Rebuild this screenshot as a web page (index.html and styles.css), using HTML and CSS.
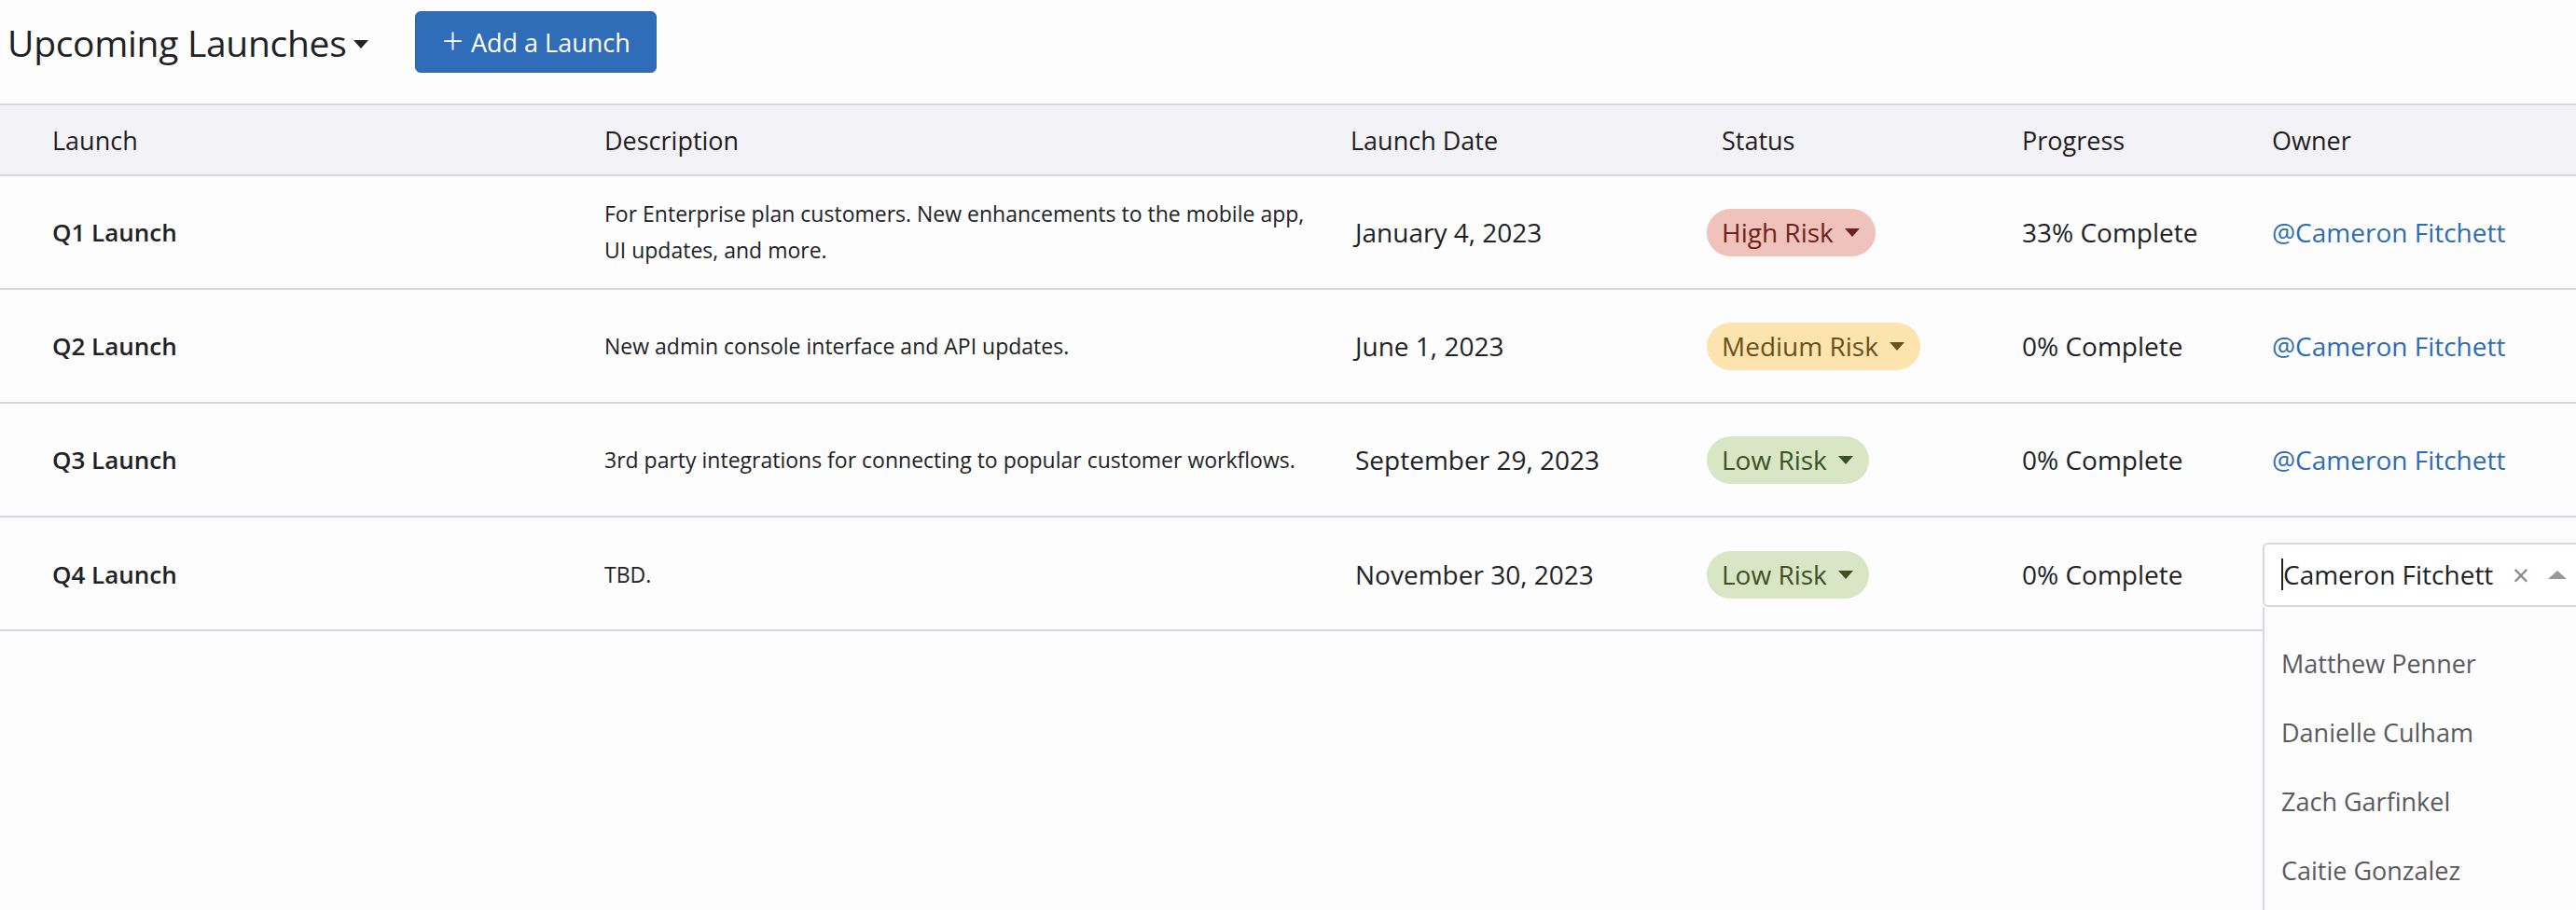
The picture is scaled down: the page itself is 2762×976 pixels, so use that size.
FILE: index.html
```html
<!DOCTYPE html>
<html lang="en">
<head>
  <meta charset="UTF-8">
  <meta name="viewport" content="width=device-width, initial-scale=1.0">
  <title>Upcoming Launches</title>
  <link rel="stylesheet" href="styles.css">
</head>
<body>
  <main class="page">
    <header class="topbar">
      <h1 class="page-title">Upcoming Launches <span class="caret caret-dark"></span></h1>
      <button class="btn-add" type="button"><span class="plus">+</span> Add a Launch</button>
    </header>

    <div class="launches">
      <div class="row row-head">
        <div class="cell">Launch</div>
        <div class="cell">Description</div>
        <div class="cell">Launch Date</div>
        <div class="cell cell-status">Status</div>
        <div class="cell">Progress</div>
        <div class="cell">Owner</div>
      </div>

      <div class="row">
        <div class="cell name">Q1 Launch</div>
        <div class="cell desc">For Enterprise plan customers. New enhancements to the mobile app, UI updates, and more.</div>
        <div class="cell date">January 4, 2023</div>
        <div class="cell"><span class="pill pill-high">High Risk <span class="caret"></span></span></div>
        <div class="cell">33% Complete</div>
        <div class="cell"><a class="owner" href="#">@Cameron Fitchett</a></div>
      </div>

      <div class="row">
        <div class="cell name">Q2 Launch</div>
        <div class="cell desc">New admin console interface and API updates.</div>
        <div class="cell date">June 1, 2023</div>
        <div class="cell"><span class="pill pill-medium">Medium Risk <span class="caret"></span></span></div>
        <div class="cell">0% Complete</div>
        <div class="cell"><a class="owner" href="#">@Cameron Fitchett</a></div>
      </div>

      <div class="row">
        <div class="cell name">Q3 Launch</div>
        <div class="cell desc">3rd party integrations for connecting to popular customer workflows.</div>
        <div class="cell date">September 29, 2023</div>
        <div class="cell"><span class="pill pill-low">Low Risk <span class="caret"></span></span></div>
        <div class="cell">0% Complete</div>
        <div class="cell"><a class="owner" href="#">@Cameron Fitchett</a></div>
      </div>

      <div class="row row-editing">
        <div class="cell name">Q4 Launch</div>
        <div class="cell desc">TBD.</div>
        <div class="cell date">November 30, 2023</div>
        <div class="cell"><span class="pill pill-low">Low Risk <span class="caret"></span></span></div>
        <div class="cell">0% Complete</div>
        <div class="cell">
          <div class="owner-picker">
            <div class="owner-select">
              <span class="select-value"><span class="text-cursor"></span>Cameron Fitchett</span>
              <span class="select-clear">&times;</span>
              <span class="select-arrow"></span>
            </div>
            <ul class="select-menu">
              <li>Matthew Penner</li>
              <li>Danielle Culham</li>
              <li>Zach Garfinkel</li>
              <li>Caitie Gonzalez</li>
            </ul>
          </div>
        </div>
      </div>
    </div>
  </main>
</body>
</html>
```

FILE: styles.css
```css
* {
  box-sizing: border-box;
}
html, body {
  margin: 0;
  background: #fdfdfe;
}
body {
  font-family: "Open Sans", Lato, sans-serif;
  color: #222226;
}
.page {
  height: 976px;
  overflow: hidden;
}
.topbar {
  display: flex;
  align-items: center;
  height: 111px;
  padding: 0 0 21px 8px;
}
.page-title {
  margin: 0;
  font-size: 39px;
  font-weight: 400;
  letter-spacing: -0.3px;
  display: flex;
  align-items: center;
  gap: 8px;
}
.btn-add {
  margin-left: 50px;
  height: 66px;
  width: 259px;
  border: 1px solid #2a63a9;
  border-radius: 6px;
  background: #2f6db9;
  color: #fff;
  font-family: inherit;
  font-size: 27px;
  display: flex;
  align-items: center;
  justify-content: center;
  gap: 8px;
  padding: 0;
}
.plus {
  font-size: 40px;
  font-weight: 300;
  line-height: 1;
  margin-top: -5px;
}
.caret {
  display: inline-block;
  width: 0;
  height: 0;
  border-left: 8px solid transparent;
  border-right: 8px solid transparent;
  border-top: 9px solid currentColor;
}
.caret-dark {
  color: #222;
  margin-top: 4px;
}

.row {
  display: grid;
  grid-template-columns: 592px 800px 382px 338px 268px 1fr;
  padding-left: 56px;
  height: 122px;
  align-items: center;
  border-bottom: 2px solid #d8d7e1;
  font-size: 28px;
}
.row-head {
  height: 78px;
  border-top: 2px solid #d8d7e1;
  background: #f3f2f7;
  font-size: 27px;
  font-weight: 500;
  color: #1e1e22;
}
.cell-status {
  padding-left: 16px;
}
.name {
  font-weight: 600;
  font-size: 26px;
}
.desc {
  font-size: 23px;
  line-height: 39px;
  padding-right: 36px;
}
.date {
  font-size: 28px;
  padding-left: 5px;
}
.pill {
  display: inline-flex;
  align-items: center;
  gap: 12px;
  height: 51px;
  padding: 0 17px 0 16px;
  border-radius: 26px;
  font-size: 28px;
}
.pill .caret {
  border-left-width: 8px;
  border-right-width: 8px;
  border-top-width: 9px;
}
.pill-high {
  background: #efc3bb;
  color: #6f2219;
}
.pill-medium {
  background: #fde3ae;
  color: #6a5019;
}
.pill-low {
  background: #d8e6c5;
  color: #3d5025;
}
.owner {
  color: #2e6cb5;
  text-decoration: none;
}

.row-editing {
  grid-template-columns: 592px 800px 382px 338px 258px 1fr;
  border-bottom: none;
  background: linear-gradient(#d8d7e1, #d8d7e1) no-repeat left bottom / 2426px 2px;
}
.owner-picker {
  position: relative;
  margin-right: -10px;
}
.owner-select {
  display: flex;
  align-items: center;
  height: 69px;
  padding-left: 18px;
  border: 2px solid #d8d7e1;
  border-right: none;
  border-radius: 6px 0 0 6px;
  background: #fff;
  font-size: 28px;
}
.select-value {
  flex: 1;
  display: flex;
  align-items: center;
}
.text-cursor {
  width: 2px;
  height: 34px;
  background: #222;
}
.select-clear {
  color: #8a8a8e;
  font-size: 32px;
  margin-right: 20px;
}
.select-arrow {
  width: 0;
  height: 0;
  border-left: 10px solid transparent;
  border-right: 10px solid transparent;
  border-bottom: 9px solid #9a9a9e;
  margin-right: 20px;
}
.select-menu {
  position: absolute;
  top: 100%;
  left: 0;
  right: 0;
  height: 340px;
  margin: 0;
  padding: 24px 0 0 18px;
  list-style: none;
  background: #fdfdfe;
  border-left: 2px solid #d8d7e1;
  color: #5b5a60;
  font-size: 27px;
}
.select-menu li {
  height: 74px;
  display: flex;
  align-items: center;
}
```
